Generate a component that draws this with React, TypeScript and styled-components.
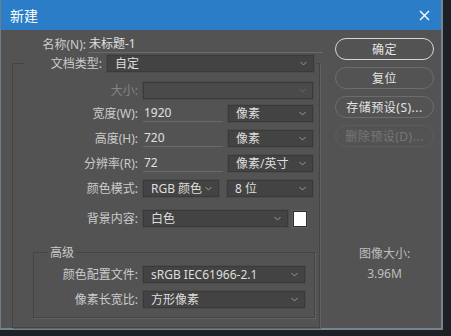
import styled, { createGlobalStyle } from "styled-components";

const Global = createGlobalStyle`
  html, body {
    margin: 0;
    padding: 0;
    background: #1d2125;
  }
  body {
    font-family: "Noto Sans", "Noto Sans CJK SC", sans-serif;
    font-size: 12px;
    color: #d2d2d2;
  }
`;

const Dialog = styled.div`
  width: 443px;
  height: 330px;
  box-sizing: border-box;
  background: #535353;
  border-left: 1px solid #6f7d88;
  border-right: 2px solid #75848f;
  border-bottom: 2px solid #75848f;
  display: flex;
  flex-direction: column;
`;

const TitleBar = styled.div`
  height: 30px;
  flex-shrink: 0;
  background: #2a7dc6;
  display: flex;
  align-items: center;
  justify-content: space-between;
  padding: 0 11px 0 9px;
  color: #fff;
  font-size: 14px;
`;

const Content = styled.div`
  display: flex;
  padding: 6px 0 0 11px;
`;

const LeftCol = styled.div`
  width: 311px;
`;

const RightCol = styled.div`
  width: 99px;
  margin-left: 12px;
  padding-top: 2px;
  display: flex;
  flex-direction: column;
  gap: 7px;
`;

const Row = styled.div<{ $mt?: number }>`
  display: flex;
  align-items: center;
  height: 17px;
  margin-top: ${(p) => p.$mt ?? 0}px;
`;

const Label = styled.div<{ $w: number; $disabled?: boolean }>`
  width: ${(p) => p.$w}px;
  flex-shrink: 0;
  text-align: right;
  line-height: 17px;
  white-space: nowrap;
  color: ${(p) => (p.$disabled ? "#858585" : "#cbcbcb")};
  margin-right: 5px;
`;

const NameInput = styled.div`
  width: 235px;
  height: 17px;
  line-height: 16px;
  box-sizing: border-box;
  border-bottom: 1px solid #6a6a6a;
  color: #e0e0e0;
  margin-left: -3px;
  padding-left: 1px;
`;

const TextInput = styled.div`
  width: 80px;
  height: 17px;
  line-height: 16px;
  box-sizing: border-box;
  border-bottom: 1px solid #6a6a6a;
  color: #e0e0e0;
  padding-left: 1px;
  margin-right: 5px;
`;

const Panel = styled.fieldset`
  width: 308px;
  box-sizing: border-box;
  margin: 2px 0 0 0;
  padding: 0 0 9px 0;
  border: 1px solid #444;
  box-shadow: 1px 1px 0 #616161;
`;

const AdvPanel = styled.fieldset`
  width: 282px;
  box-sizing: border-box;
  margin: 17px 0 0 20px;
  padding: 0 0 9px 0;
  border: 1px solid #444;
  box-shadow: 1px 1px 0 #616161;
`;

const Legend = styled.legend<{ $ml: number }>`
  padding: 0 2px;
  margin-left: ${(p) => p.$ml}px;
  display: flex;
  align-items: center;
  height: 17px;
  line-height: 17px;
  color: #cbcbcb;
`;

const SelectBox = styled.div<{ $w: number; $disabled?: boolean }>`
  width: ${(p) => p.$w}px;
  height: 17px;
  box-sizing: border-box;
  flex-shrink: 0;
  background: ${(p) => (p.$disabled ? "#4a4a4a" : "#434343")};
  border: 1px solid #3a3a3a;
  box-shadow: 0 0 0 1px #4c4c4c;
  display: flex;
  align-items: center;
  justify-content: space-between;
  padding: 0 6px 0 7px;
  color: #dedede;
  line-height: 15px;
  white-space: nowrap;
  overflow: hidden;
`;

const Chevron = ({ dim }: { dim?: boolean }) => (
  <svg width="7" height="5" viewBox="0 0 7 5" style={{ flexShrink: 0 }}>
    <polyline
      points="0.5,1 3.5,4 6.5,1"
      fill="none"
      stroke={dim ? "#666" : "#9a9a9a"}
      strokeWidth="1"
    />
  </svg>
);

const Select = ({
  w,
  value,
  disabled,
  mr,
}: {
  w: number;
  value?: string;
  disabled?: boolean;
  mr?: number;
}) => (
  <SelectBox $w={w} $disabled={disabled} style={mr ? { marginRight: mr } : undefined}>
    <span>{value}</span>
    <Chevron dim={disabled} />
  </SelectBox>
);

const Swatch = styled.div`
  width: 14px;
  height: 16px;
  box-sizing: border-box;
  background: #fff;
  border: 1px solid #2e2e2e;
  box-shadow: 0 0 0 1px #5f5f5f;
`;

const Button = styled.div<{ $variant?: "primary" | "disabled" }>`
  height: 22px;
  box-sizing: border-box;
  border-radius: 11px;
  border: 1.5px solid
    ${(p) =>
      p.$variant === "primary"
        ? "#d6d6d6"
        : p.$variant === "disabled"
        ? "#5c5c5c"
        : "#6c6c6c"};
  display: flex;
  align-items: center;
  justify-content: center;
  color: ${(p) => (p.$variant === "disabled" ? "#777" : "#e4e4e4")};
  font-size: 12px;
  letter-spacing: 0.5px;
`;

const Info = styled.div`
  margin-top: 90px;
  text-align: center;
  line-height: 20px;
  color: #bdbdbd;
`;

export default function App() {
  return (
    <>
      <Global />
      <Dialog>
        <TitleBar>
          <span>新建</span>
          <svg width="11" height="11" viewBox="0 0 11 11">
            <path d="M1 1L10 10M10 1L1 10" stroke="#fff" strokeWidth="1.4" />
          </svg>
        </TitleBar>
        <Content>
          <LeftCol>
            <Row>
              <Label $w={74}>名称(N):</Label>
              <NameInput>未标题-1</NameInput>
            </Row>
            <Panel>
              <Legend $ml={11}>
                <Label $w={76}>文档类型:</Label>
                <Select w={207} value="自定" />
              </Legend>
              <Row $mt={10}>
                <Label $w={125} $disabled>
                  大小:
                </Label>
                <Select w={170} disabled />
              </Row>
              <Row $mt={6}>
                <Label $w={125}>宽度(W):</Label>
                <TextInput>1920</TextInput>
                <Select w={85} value="像素" />
              </Row>
              <Row $mt={8}>
                <Label $w={125}>高度(H):</Label>
                <TextInput>720</TextInput>
                <Select w={85} value="像素" />
              </Row>
              <Row $mt={8}>
                <Label $w={125}>分辨率(R):</Label>
                <TextInput>72</TextInput>
                <Select w={85} value="像素/英寸" />
              </Row>
              <Row $mt={8}>
                <Label $w={125}>颜色模式:</Label>
                <Select w={76} value="RGB 颜色" mr={8} />
                <Select w={86} value="8 位" />
              </Row>
              <Row $mt={13}>
                <Label $w={125}>背景内容:</Label>
                <Select w={145} value="白色" mr={5} />
                <Swatch />
              </Row>
              <AdvPanel>
                <Legend $ml={14}>高级</Legend>
                <Row $mt={5}>
                  <Label $w={104}>颜色配置文件:</Label>
                  <Select w={162} value="sRGB IEC61966-2.1" />
                </Row>
                <Row $mt={8}>
                  <Label $w={104}>像素长宽比:</Label>
                  <Select w={162} value="方形像素" />
                </Row>
              </AdvPanel>
            </Panel>
          </LeftCol>
          <RightCol>
            <Button $variant="primary">确定</Button>
            <Button>复位</Button>
            <Button>存储预设(S)...</Button>
            <Button $variant="disabled">删除预设(D)...</Button>
            <Info>
              图像大小:
              <br />
              3.96M
            </Info>
          </RightCol>
        </Content>
      </Dialog>
    </>
  );
}
